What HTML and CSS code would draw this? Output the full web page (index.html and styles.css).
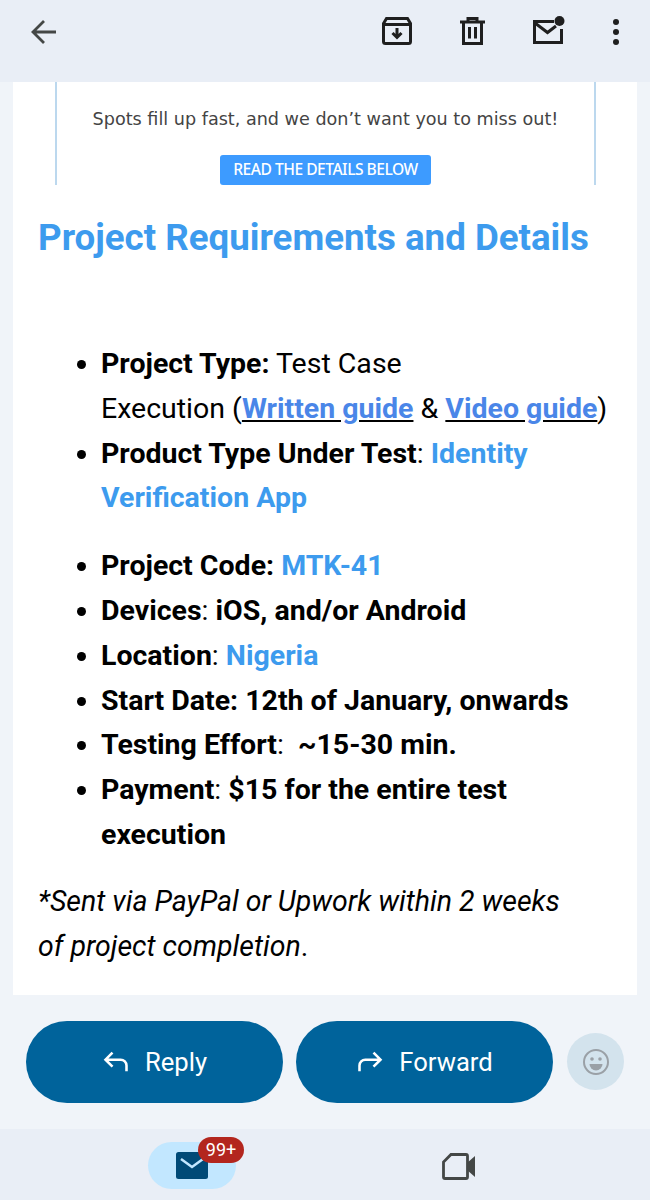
FILE: index.html
```html
<!DOCTYPE html>
<html lang="en">
<head>
  <meta charset="UTF-8" />
  <title>Project Requirements</title>
  <link rel="stylesheet" href="styles.css">
</head>
<body>

  <div class="topbar">
    <svg class="icon back" viewBox="0 0 28 28"><path d="M27 14H4M15 3 4 14l11 11"/></svg>
    <div class="top-actions">
      <svg class="icon archive" viewBox="0 0 30 28"><path d="M1.500 6.500 4.500 1.500h21l3 5v18a2 2 0 0 1-2 2h-23a2 2 0 0 1-2-2zM1.500 7.500h27"/><path class="thin" d="M15 11v9.500M10.500 16l4.500 4.500 4.500-4.500"/></svg>
      <svg class="icon trash" viewBox="0 0 25 28"><path d="M0 5h25M8 5V1.500h9V5M3.500 5v21.500h18V5M9.500 10v11.500M15.500 10v11.500"/></svg>
      <svg class="icon unread" viewBox="0 0 32 28"><path d="M21 5.500H1.500v21h27V13"/><path d="m2 7 12.500 9.500L23 10"/><circle cx="26.500" cy="5" r="5"/></svg>
      <div class="dots"><span></span><span></span><span></span></div>
    </div>
  </div>

  <div class="content">
    <div class="mail">
      <div class="banner">
        <p class="banner-text">Spots fill up fast, and we don’t want you to miss out!</p>
        <a class="banner-btn">READ THE DETAILS BELOW</a>
      </div>

      <h2>Project Requirements and Details</h2>

      <ul class="group-one">
        <li><b>Project Type:</b> Test Case<br>Execution (<a class="guide">Written guide</a> &amp; <a class="guide">Video guide</a>)</li>
        <li><b>Product Type Under Test</b>: <b class="blue">Identity<br>Verification App</b></li>
      </ul>
      <ul class="group-two">
        <li><b>Project Code: <span class="blue">MTK-41</span></b></li>
        <li><b>Devices</b>: <b>iOS, and/or Android</b></li>
        <li><b>Location</b>: <b class="blue">Nigeria</b></li>
        <li><b>Start Date: 12th of January, onwards</b></li>
        <li><b>Testing Effort</b>:&nbsp; <b>~15-30 min.</b></li>
        <li><b>Payment</b>: <b>$15 for the entire test<br>execution</b></li>
      </ul>

      <p class="note"><i>*Sent via PayPal or Upwork within 2 weeks<br>of project completion</i>.</p>
    </div>
  </div>

  <div class="reply-bar">
    <button class="pill">
      <svg viewBox="0 0 24 24"><path d="M9 4 3 10l6 6M3 10h13a5 5 0 0 1 5 5v5"/></svg>
      Reply
    </button>
    <button class="pill">
      <svg viewBox="0 0 24 24"><path d="m15 4 6 6-6 6M21 10H8a5 5 0 0 0-5 5v5"/></svg>
      Forward
    </button>
    <div class="emoji">
      <svg viewBox="0 0 28 28"><circle cx="14" cy="14" r="12"/><circle class="fill" cx="10" cy="11" r="1.800"/><circle class="fill" cx="18" cy="11" r="1.800"/><path class="fill" d="M7.500 16h13a6.500 6.500 0 0 1-13 0z"/></svg>
    </div>
  </div>

  <div class="bottom-nav">
    <div class="nav-mail">
      <svg viewBox="0 0 32 27"><rect width="32" height="27" rx="2.500"/><path d="m5 7 11 8 11-8"/></svg>
      <span class="badge">99+</span>
    </div>
    <svg class="nav-video" viewBox="0 0 33 27"><path d="M9 1.500h15a1.500 1.500 0 0 1 1.500 1.500v21a1.500 1.500 0 0 1-1.500 1.500H3A1.500 1.500 0 0 1 1.500 24V9z"/><path class="fill" d="m25 10 8-7v21l-8-7z"/></svg>
  </div>

</body>
</html>
```

FILE: styles.css
```css
* {
  box-sizing: border-box;
}

html, body {
  height: 100%;
}

body {
  margin: 0;
  width: 650px;
  height: 1200px;
  overflow: hidden;
  display: flex;
  flex-direction: column;
  font-family: Roboto, "Liberation Sans", sans-serif;
  background: #f0f4f9;
  color: #000;
}

/* top bar */
.topbar {
  height: 82px;
  flex: none;
  background: #e9eef6;
  display: flex;
  justify-content: space-between;
  padding: 17px 31px 0 29px;
}

.icon {
  fill: none;
  stroke: #1f1f1f;
  stroke-width: 3;
}

.back {
  width: 28px;
  height: 28px;
  margin-top: 1px;
  stroke: #444746;
  stroke-width: 2.800;
}

.top-actions {
  display: flex;
  align-items: flex-start;
  gap: 48px;
}

.archive {
  width: 30px;
  height: 28px;
}

.trash {
  width: 25px;
  height: 28px;
}

.unread {
  width: 32px;
  height: 28px;
  margin-top: -1px;
}

.unread circle {
  fill: #1f1f1f;
  stroke: none;
}

.dots {
  display: flex;
  flex-direction: column;
  gap: 4px;
  margin-top: 2px;
}

.dots span {
  width: 6px;
  height: 6px;
  border-radius: 50%;
  background: #1f1f1f;
}

/* mail body */
.content {
  flex: 1;
  padding: 0 13px;
}

.mail {
  background: #fff;
  height: 913px;
  overflow: hidden;
  padding: 0 25px;
}

.banner {
  margin: 0 17px;
  width: 541px;
  height: 103px;
  border-left: 2px solid #bcd8ee;
  border-right: 2px solid #bcd8ee;
  text-align: center;
  padding-top: 26px;
}

.banner-text {
  margin: 0;
  font-family: "DejaVu Sans", sans-serif;
  font-size: 17.600px;
  line-height: 22px;
  color: #444;
  white-space: nowrap;
}

.banner-btn {
  display: block;
  width: 211px;
  height: 30px;
  margin: 25px auto 0;
  background: #3d9bff;
  border-radius: 3px;
  color: #fff;
  font-family: "Noto Sans", sans-serif;
  font-weight: 500;
  font-size: 15.600px;
  letter-spacing: -0.5px;
  line-height: 29px;
  white-space: nowrap;
}

h2 {
  margin: 30px 0 0;
  font-size: 36.700px;
  line-height: 46px;
  font-weight: 700;
  color: #3d9bee;
  white-space: nowrap;
}

ul {
  margin: 0;
  padding-left: 63px;
  font-size: 28.500px;
  line-height: 44.800px;
  white-space: nowrap;
}

.group-one {
  margin-top: 81px;
}

.group-two {
  margin-top: 23px;
}

.blue {
  color: #3d9bee;
}

.guide {
  color: #4a86e8;
  font-weight: 700;
  text-decoration: underline;
  text-decoration-color: #000;
}

.note {
  margin: 22px 0 0;
  font-size: 28.500px;
  line-height: 44.800px;
  white-space: nowrap;
}

/* reply bar */
.reply-bar {
  height: 134px;
  flex: none;
  display: flex;
  align-items: flex-start;
  gap: 13px;
  padding: 26px 26px 0;
}

.pill {
  width: 257px;
  height: 82px;
  border: none;
  border-radius: 41px;
  background: #00639b;
  color: #fff;
  font-family: Roboto, sans-serif;
  font-size: 25.600px;
  display: flex;
  align-items: center;
  justify-content: center;
  gap: 15px;
}

.pill svg {
  width: 28px;
  height: 28px;
  fill: none;
  stroke: #fff;
  stroke-width: 2.200;
}

.emoji {
  width: 57px;
  height: 57px;
  margin-top: 12px;
  margin-left: 1px;
  border-radius: 50%;
  background: #d3e3ed;
  display: flex;
  align-items: center;
  justify-content: center;
}

.emoji svg {
  width: 28px;
  height: 28px;
  fill: none;
  stroke: #9aa0a6;
  stroke-width: 2;
}

.emoji .fill {
  fill: #9aa0a6;
  stroke: none;
}

/* bottom nav */
.bottom-nav {
  height: 71px;
  flex: none;
  background: #e9eef6;
  display: flex;
  padding: 13px 0 0 148px;
}

.nav-mail {
  position: relative;
  width: 88px;
  height: 47px;
  border-radius: 24px;
  background: #c2e7ff;
  display: flex;
  align-items: center;
  justify-content: center;
}

.nav-mail svg {
  width: 32px;
  height: 27px;
}

.nav-mail rect {
  fill: #004a77;
}

.nav-mail path {
  fill: none;
  stroke: #c2e7ff;
  stroke-width: 2.500;
}

.badge {
  position: absolute;
  left: 50px;
  top: -5px;
  width: 46px;
  height: 26px;
  border-radius: 13px;
  background: #b3261e;
  color: #fff;
  font-size: 18px;
  line-height: 26px;
  text-align: center;
}

.nav-video {
  width: 33px;
  height: 27px;
  margin-left: 206px;
  margin-top: 11px;
  fill: none;
  stroke: #444746;
  stroke-width: 2.800;
}

.nav-video .fill {
  fill: #444746;
  stroke: none;
}
```
